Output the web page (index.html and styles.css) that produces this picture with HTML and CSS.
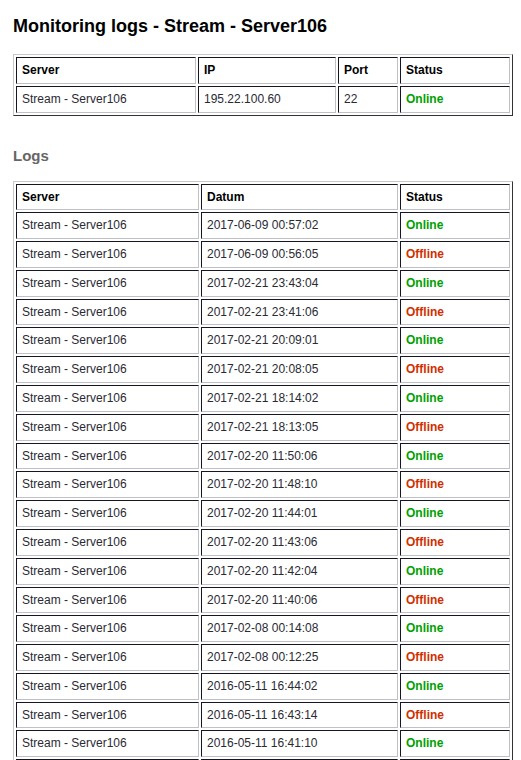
FILE: index.html
```html
<!DOCTYPE html>
<html>
<head>
<meta charset="utf-8">
<title>Monitoring logs - Stream - Server106</title>
<link rel="stylesheet" href="styles.css">
</head>
<body>
<div class="page">
  <h1 class="title">Monitoring logs - Stream - Server106</h1>
  <table class="grid info">
    <tr>
      <th class="c-server">Server</th>
      <th class="c-ip">IP</th>
      <th class="c-port">Port</th>
      <th class="c-status">Status</th>
    </tr>
    <tr>
      <td>Stream - Server106</td>
      <td>195.22.100.60</td>
      <td>22</td>
      <td class="online">Online</td>
    </tr>
  </table>

  <h3 class="subtitle">Logs</h3>
  <table class="grid logs">
    <tr>
      <th class="l-server">Server</th>
      <th class="l-date">Datum</th>
      <th class="l-status">Status</th>
    </tr>
    <tr><td>Stream - Server106</td><td>2017-06-09 00:57:02</td><td class="online">Online</td></tr>
    <tr><td>Stream - Server106</td><td>2017-06-09 00:56:05</td><td class="offline">Offline</td></tr>
    <tr><td>Stream - Server106</td><td>2017-02-21 23:43:04</td><td class="online">Online</td></tr>
    <tr><td>Stream - Server106</td><td>2017-02-21 23:41:06</td><td class="offline">Offline</td></tr>
    <tr><td>Stream - Server106</td><td>2017-02-21 20:09:01</td><td class="online">Online</td></tr>
    <tr><td>Stream - Server106</td><td>2017-02-21 20:08:05</td><td class="offline">Offline</td></tr>
    <tr><td>Stream - Server106</td><td>2017-02-21 18:14:02</td><td class="online">Online</td></tr>
    <tr><td>Stream - Server106</td><td>2017-02-21 18:13:05</td><td class="offline">Offline</td></tr>
    <tr><td>Stream - Server106</td><td>2017-02-20 11:50:06</td><td class="online">Online</td></tr>
    <tr><td>Stream - Server106</td><td>2017-02-20 11:48:10</td><td class="offline">Offline</td></tr>
    <tr><td>Stream - Server106</td><td>2017-02-20 11:44:01</td><td class="online">Online</td></tr>
    <tr><td>Stream - Server106</td><td>2017-02-20 11:43:06</td><td class="offline">Offline</td></tr>
    <tr><td>Stream - Server106</td><td>2017-02-20 11:42:04</td><td class="online">Online</td></tr>
    <tr><td>Stream - Server106</td><td>2017-02-20 11:40:06</td><td class="offline">Offline</td></tr>
    <tr><td>Stream - Server106</td><td>2017-02-08 00:14:08</td><td class="online">Online</td></tr>
    <tr><td>Stream - Server106</td><td>2017-02-08 00:12:25</td><td class="offline">Offline</td></tr>
    <tr><td>Stream - Server106</td><td>2016-05-11 16:44:02</td><td class="online">Online</td></tr>
    <tr><td>Stream - Server106</td><td>2016-05-11 16:43:14</td><td class="offline">Offline</td></tr>
    <tr><td>Stream - Server106</td><td>2016-05-11 16:41:10</td><td class="online">Online</td></tr>
    <tr><td>Stream - Server106</td><td>2016-05-11 16:40:04</td><td class="offline">Offline</td></tr>
  </table>
</div>
</body>
</html>
```

FILE: styles.css
```css
html, body {
  margin: 0;
  padding: 0;
  background: #ffffff;
}

body {
  font-family: "Liberation Sans", Arial, sans-serif;
  font-size: 13px;
  color: #2a2a33;
}

.page {
  padding: 16px 8px 0 13px;
}

.title {
  margin: 0 0 17px 0;
  font-size: 18px;
  line-height: 21px;
  font-weight: bold;
  color: #000;
}

.subtitle {
  margin: 31px 0 16px 0;
  font-size: 15px;
  line-height: 18px;
  font-weight: bold;
  color: #666;
}

.grid {
  border-collapse: separate;
  border-spacing: 2px;
  width: 500px;
  border-style: solid;
  border-width: 1px;
  border-color: #c8c8c8 #333 #333 #c8c8c8;
  font-size: 12px;
}

.grid th,
.grid td {
  box-sizing: border-box;
  padding: 5px;
  line-height: 14.78px;
  text-align: left;
  vertical-align: middle;
  border-style: solid;
  border-width: 1px;
  border-color: #151525 #c0c0c8 #c0c0c8 #151525;
  white-space: nowrap;
}

.grid th {
  font-weight: bold;
  color: #000;
}

.c-server { width: 180px; }
.c-ip { width: 138px; }
.c-port { width: 60px; }
.c-status { width: 110px; }

.l-server { width: 183px; }
.l-date { width: 197px; }
.l-status { width: 110px; }

.grid td.online {
  color: #00a000;
  font-weight: bold;
}

.grid td.offline {
  color: #d03000;
  font-weight: bold;
}
```
